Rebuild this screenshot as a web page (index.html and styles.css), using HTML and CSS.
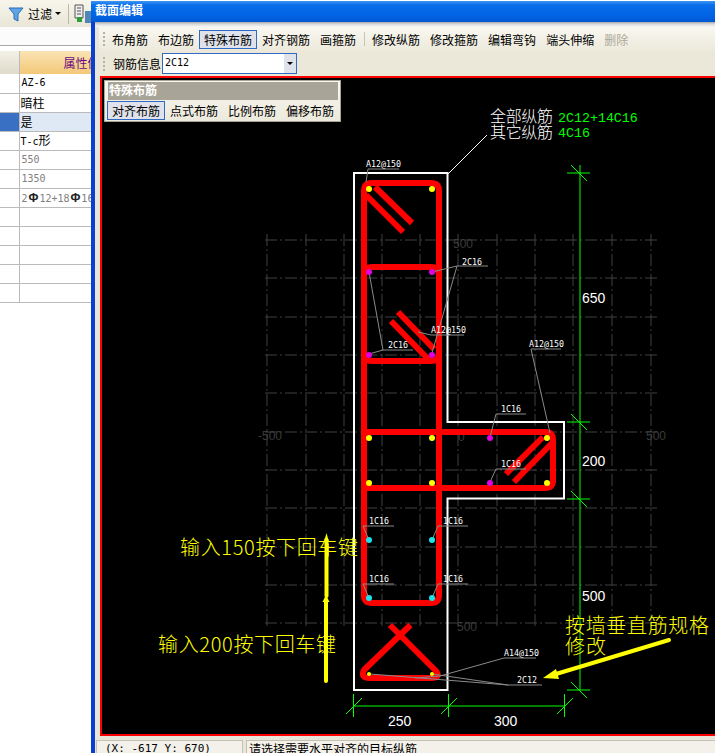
FILE: index.html
```html
<!DOCTYPE html>
<html lang="zh">
<head>
<meta charset="utf-8">
<title>截面编辑</title>
<link rel="stylesheet" href="styles.css">
</head>
<body>
<div class="desk">
  <div class="app">
    <div class="app-bar">
      <svg class="funnel" width="16" height="16" viewBox="0 0 16 16"><path d="M1 2H15L10 8V15L6 13V8Z" fill="#5fa4e6" stroke="#2a6db5"/></svg>
      <span class="app-label">过滤</span>
      <span class="caret"></span>
      <span class="app-sep"></span>
      <svg class="doc" width="20" height="20" viewBox="0 0 20 20"><path d="M1 1H9V14H1Z" fill="#eee" stroke="#555"/><path d="M3 4H7M3 7H7M3 10H7" stroke="#555"/><path d="M3 13H8V18H3Z" fill="#2f9e3a"/><path d="M11 7H20V19H11Z" fill="#4f86b8"/></svg>
    </div>
    <div class="app-strip"></div>
    <table class="grid">
      <thead><tr><th class="idx"></th><th class="val"><span>属性值</span></th></tr></thead>
      <tbody>
        <tr><td class="idx"></td><td class="mono">AZ-6</td></tr>
        <tr><td class="idx"></td><td>暗柱</td></tr>
        <tr class="sel"><td class="idx"></td><td>是</td></tr>
        <tr><td class="idx"></td><td><span class="mono">T-c</span>形</td></tr>
        <tr><td class="idx"></td><td class="mono dim">550</td></tr>
        <tr><td class="idx"></td><td class="mono dim">1350</td></tr>
        <tr><td class="idx"></td><td class="mono dim">2<b>Φ</b>12+18<b>Φ</b>16</td></tr>
        <tr><td class="idx"></td><td></td></tr>
        <tr><td class="idx"></td><td></td></tr>
        <tr><td class="idx"></td><td></td></tr>
        <tr><td class="idx"></td><td></td></tr>
        <tr><td class="idx"></td><td></td></tr>
      </tbody>
    </table>
  </div>

  <div class="window">
    <div class="title">截面编辑</div>
    <div class="body">
      <div class="rule"></div>
      <div class="tools tools-a">
        <span class="grip"></span>
        <span class="btn">布角筋</span>
        <span class="btn">布边筋</span>
        <span class="btn on">特殊布筋</span>
        <span class="btn">对齐钢筋</span>
        <span class="btn">画箍筋</span>
        <span class="sep"></span>
        <span class="btn">修改纵筋</span>
        <span class="btn">修改箍筋</span>
        <span class="btn">编辑弯钩</span>
        <span class="btn">端头伸缩</span>
        <span class="btn off">删除</span>
      </div>
      <div class="tools tools-b">
        <span class="grip"></span>
        <span class="info">钢筋信息</span>
        <div class="combo"><span class="combo-val">2C12</span><span class="combo-btn"></span></div>
      </div>
      <div class="canvas">
        <svg class="draw" width="613" height="656" viewBox="102 78 613 656">
          <g class="axis">
            <path d="M265 240H657M265 278H657M265 317H657M265 355H657M265 393H657M265 432H657M265 470H657M265 508H657M265 547H657M265 585H657M265 623H657"/>
            <path d="M267 234V627M306 234V627M344 234V627M382 234V627M420 234V627M458 234V627M497 234V627M535 234V627M573 234V627M612 234V627M651 234V627"/>
          </g>
          <g class="axis-text">
            <text x="453" y="248">500</text>
            <text x="646" y="440">500</text>
            <text x="457" y="631">500</text>
            <text x="258" y="440">-500</text>
            <text x="458" y="441">0</text>
          </g>

          <path class="outline" d="M354 173H447.5V422H564V498.500H447.500V690H354Z"/>
          <path class="pointer" d="M448 174L487 135"/>

          <g class="rebar">
            <path d="M372 183H431Q439 183 439 191V595Q439 603 431 603H372Q364 603 364 595V191Q364 183 372 183Z"/>
            <path d="M364 275Q364 267 372 267H431Q439 267 439 275"/>
            <path d="M364 353Q364 361 372 361H431Q439 361 439 353"/>
            <path d="M364 432H545Q553 432 553 440V480Q553 488 545 488H364"/>
            <path d="M375 187L412 223M366 195L403 232"/>
            <path d="M398 312L434 349M391 321L429 360"/>
            <path d="M543 437L506 474M552 443L514 482"/>
            <path d="M390 625L436 671Q441 678 431 678H370Q360 678 364 670L410.500 625"/>
          </g>

          <g class="lead">
            <path d="M399 169H368L366 182"/>
            <path d="M488 266H457L432 272M457 266L432 353"/>
            <path d="M413 350H383L369 272M383 350L369 354"/>
            <path d="M464 335H431L418 332"/>
            <path d="M561 349H531L550 433"/>
            <path d="M526 414H496L490 437"/>
            <path d="M526 469H496L490 482"/>
            <path d="M394 526H363L369 540"/>
            <path d="M468 526H438L432 540"/>
            <path d="M394 584H363L369 598"/>
            <path d="M468 584H438L432 598"/>
            <path d="M536 658H504L440 676L415 678"/>
            <path d="M542 685H508L370 674M508 685L432 674"/>
          </g>

          <g class="dots-y">
            <circle cx="369" cy="189" r="3"/><circle cx="432" cy="189" r="3"/>
            <circle cx="369" cy="438" r="3"/><circle cx="432" cy="438" r="3"/><circle cx="547" cy="438" r="3"/>
            <circle cx="369" cy="483" r="3"/><circle cx="432" cy="483" r="3"/><circle cx="547" cy="483" r="3"/>
            <circle cx="369" cy="674" r="2"/><circle cx="432" cy="674" r="2"/>
          </g>
          <g class="dots-m">
            <circle cx="369" cy="272" r="3"/><circle cx="432" cy="272" r="3"/>
            <circle cx="369" cy="355" r="3"/><circle cx="432" cy="355" r="3"/>
            <circle cx="490" cy="438" r="3"/><circle cx="490" cy="483" r="3"/>
          </g>
          <g class="dots-c">
            <circle cx="369" cy="540" r="3"/><circle cx="432" cy="540" r="3"/>
            <circle cx="369" cy="598" r="3"/><circle cx="432" cy="598" r="3"/>
          </g>

          <g class="tag">
            <text x="366" y="167">A12@150</text>
            <text x="462" y="265">2C16</text>
            <text x="388" y="348">2C16</text>
            <text x="431" y="333">A12@150</text>
            <text x="529" y="347">A12@150</text>
            <text x="501" y="412">1C16</text>
            <text x="501" y="467">1C16</text>
            <text x="369" y="524">1C16</text>
            <text x="443" y="524">1C16</text>
            <text x="369" y="582">1C16</text>
            <text x="443" y="582">1C16</text>
            <text x="504" y="656">A14@150</text>
            <text x="517" y="683">2C12</text>
          </g>

          <g class="dimension">
            <path d="M580 165V690"/>
            <path d="M567 173H590M571 165L587 181"/>
            <path d="M567 422H590M571 414L587 430"/>
            <path d="M567 499H590M571 491L587 507"/>
            <path d="M567 690H590M571 682L587 698"/>
            <path d="M353 706H564"/>
            <path d="M353.500 694V717M362 698L346 714"/>
            <path d="M448.500 694V717M457 698L441 714"/>
            <path d="M564.500 694V717M573 698L557 714"/>
          </g>
          <g class="dim-text">
            <text x="582" y="303">650</text>
            <text x="582" y="466">200</text>
            <text x="582" y="601">500</text>
            <text x="388" y="726">250</text>
            <text x="494" y="726">300</text>
          </g>

          <g class="legend">
            <text x="490" y="122" textLength="63">全部纵筋</text>
            <text x="490" y="138" textLength="63">其它纵筋</text>
          </g>
          <g class="legend-val">
            <text x="558" y="122">2C12+14C16</text>
            <text x="558" y="137">4C16</text>
          </g>

          <g class="note">
            <text x="180" y="555" textLength="178">输入150按下回车键</text>
            <text x="158" y="652" textLength="178">输入200按下回车键</text>
            <text x="565" y="633" textLength="144">按墙垂直筋规格</text>
            <text x="565" y="654" textLength="41">修改</text>
          </g>
          <g class="arrow">
            <path d="M326.500 596V540"/>
            <path d="M326 681V600"/>
            <path d="M669 640L556 674"/>
          </g>
          <g class="arrow-head">
            <path d="M326.500 533L329 542H324Z"/>
            <path d="M326 595L329.500 602H322.500Z"/>
            <path d="M543 678L556 669L559 679Z"/>
          </g>
        </svg>
        <div class="float">
          <div class="float-title">特殊布筋</div>
          <div class="float-row">
            <span class="btn on">对齐布筋</span>
            <span class="btn">点式布筋</span>
            <span class="btn">比例布筋</span>
            <span class="btn">偏移布筋</span>
          </div>
        </div>
      </div>
      <div class="status">
        <div class="cell cell-pos">(X: -617 Y: 670)</div>
        <div class="cell cell-msg">请选择需要水平对齐的目标纵筋</div>
      </div>
    </div>
  </div>
</div>
</body>
</html>
```
FILE: styles.css
```css
* { box-sizing: border-box; }
html, body { margin: 0; padding: 0; background: #fff; }
body { font: 12px/1 "Noto Sans CJK SC", "Liberation Sans", sans-serif; color: #000; }

.desk { position: relative; width: 715px; height: 753px; overflow: hidden; }

/* background application */
.app { width: 140px; height: 753px; background: #fff; }
.app-bar { height: 27px; display: flex; align-items: center; padding-left: 8px; background: linear-gradient(#f8f6ec, #e9e6d7); }
.funnel { flex: none; }
.app-label { margin-left: 4px; }
.caret { margin-left: 3px; border: 3px solid transparent; border-top: 3px solid #000; border-bottom: 0; }
.app-sep { width: 1px; height: 20px; margin: 0 5px 0 7px; background: #bdb9a8; }
.doc { flex: none; }
.app-strip { height: 19px; background: #fbfbfb; border-bottom: 1px solid #a8a8a8; }
.grid { margin-top: 5px; width: 140px; table-layout: fixed; border-collapse: collapse; }
.grid th { height: 23px; padding: 0; font-weight: 400; border-right: 1px solid #bbb; }
.grid th.idx { width: 19px; background: linear-gradient(#f3f1e6, #dedbcb); }
.grid th.val { background: linear-gradient(#fae3b4, #f3c878); color: #6a0a80; text-align: left; padding-left: 44px; white-space: nowrap; overflow: hidden; }
.grid td { height: 19px; padding: 0 0 0 1px; border-right: 1px solid #bbb; border-bottom: 1px solid #bbb; white-space: nowrap; overflow: hidden; }
.grid td.idx { width: 19px; }
.grid .sel td { background: #dfe8f5; }
.grid .sel td.idx { background: #3a70c4; }
.mono { font-family: "DejaVu Sans Mono", monospace; font-size: 10px; }
.grid td.mono { padding-left: 2px; }
.dim { color: #808080; }
.dim b { margin: 0 1px; font-family: "Liberation Sans", sans-serif; font-size: 12px; font-weight: 700; color: #222; }

/* floating dialog */
.window { position: absolute; left: 91px; top: 1px; width: 624px; height: 752px; display: flex; flex-direction: column; overflow: hidden; background: #0a3fd0; }
.title { flex: none; height: 21px; padding: 3px 0 0 4px; color: #fff; font-weight: 700; font-size: 12px; background: linear-gradient(#3d95f5 0, #0a6eea 4px, #0063e5 70%, #0058d0 100%); }
.body { flex: 1; min-height: 0; margin-left: 4px; padding-left: 4px; background: #e8e6da; display: flex; flex-direction: column; }
.rule { flex: none; height: 5px; margin-left: -4px; background: linear-gradient(#a8a8a8, #d8d8d8 40%, #f8f8f8); }
.tools { flex: none; display: flex; align-items: center; padding-left: 4px; }
.tools-a { height: 24px; background: linear-gradient(#f9f8f0, #ece9dc); }
.tools-b { height: 25px; background: #ebe8d9; }
.grip { width: 2px; height: 14px; margin-right: 2px; background: repeating-linear-gradient(#b5b2a3 0 2px, transparent 2px 4px); }
.btn { flex: none; height: 19px; padding: 0 4px; line-height: 17px; border: 1px solid transparent; white-space: nowrap; }
.btn.on { background: #dfe2ea; border-color: #316ac5; }
.btn.off { color: #aca899; }
.sep { flex: none; width: 1px; height: 14px; margin: 0 2px 0 3px; background: #c8c5b5; }
.info { margin: 0 1px 0 6px; white-space: nowrap; }
.combo { width: 135px; height: 21px; display: flex; justify-content: space-between; border: 1px solid #316ac5; background: #fff; }
.combo-val { padding: 4px 0 0 2px; font-family: "DejaVu Sans Mono", monospace; font-size: 10px; }
.combo-btn { width: 12px; position: relative; background: #dfe2ea; }
.combo-btn::after { content: ""; position: absolute; left: 3px; top: 8px; border: 3px solid transparent; border-top: 3px solid #000; border-bottom: 0; }

/* drawing */
.canvas { flex: none; position: relative; height: 660px; margin-left: 1px; border: 2px solid #f00; border-right: 0; background: #000; }
.draw { display: block; }
.axis path { fill: none; stroke: #404040; stroke-width: 1; stroke-dasharray: 12 3 2 3; }
.axis-text text { font: 12px "Liberation Sans", sans-serif; fill: #3c3c3c; }
.outline { fill: none; stroke: #fff; stroke-width: 2; }
.pointer { fill: none; stroke: #fff; stroke-width: 1; }
.rebar path { fill: none; stroke: #f00; stroke-width: 6; stroke-linejoin: round; }
.lead path { fill: none; stroke: #8a8a8a; stroke-width: 1; }
.dots-y circle { fill: #ff0; }
.dots-m circle { fill: #e000e0; }
.dots-c circle { fill: #1ee0e8; }
.tag text { font: 8.300px "DejaVu Sans Mono", monospace; fill: #fff; }
.dimension path { fill: none; stroke: #0f0; stroke-width: 1; }
.dim-text text { font: 14px "Liberation Sans", sans-serif; fill: #fff; }
.legend text { font: 300 16px "Noto Sans CJK SC", sans-serif; fill: #fff; }
.legend-val text { font: 13.300px "Liberation Mono", monospace; fill: #0f0; }
.note text { font: 300 20px "Noto Sans CJK SC", sans-serif; fill: #ff0; }
.arrow path { fill: none; stroke: #ff0; stroke-width: 4; stroke-linecap: round; }
.arrow-head path { fill: #ff0; }

.float { position: absolute; left: 2px; top: 2px; width: 237px; height: 42px; padding: 1px 2px; background: linear-gradient(#f9f8f0, #ece9dc); border: 1px solid #a8a497; }
.float-title { height: 18px; margin-left: 1px; padding: 2px 0 0 1px; background: #a8a497; color: #fff; font-weight: 700; font-size: 12px; }
.float-row { display: flex; margin-top: 1px; }
.float-row .btn { width: 58px; }

.status { flex: none; margin: 4px 0 0 -3px; display: flex; gap: 3px; height: 13px; overflow: hidden; }
.cell { flex: none; height: 20px; padding: 2px 0 0 8px; background: #f3f1e9; border: 1px solid #c5c2b2; border-bottom: 0; white-space: nowrap; }
.cell-pos { width: 147px; font-family: "DejaVu Sans Mono", monospace; font-size: 11px; }
.cell-msg { width: 470px; padding-left: 2px; }
```
